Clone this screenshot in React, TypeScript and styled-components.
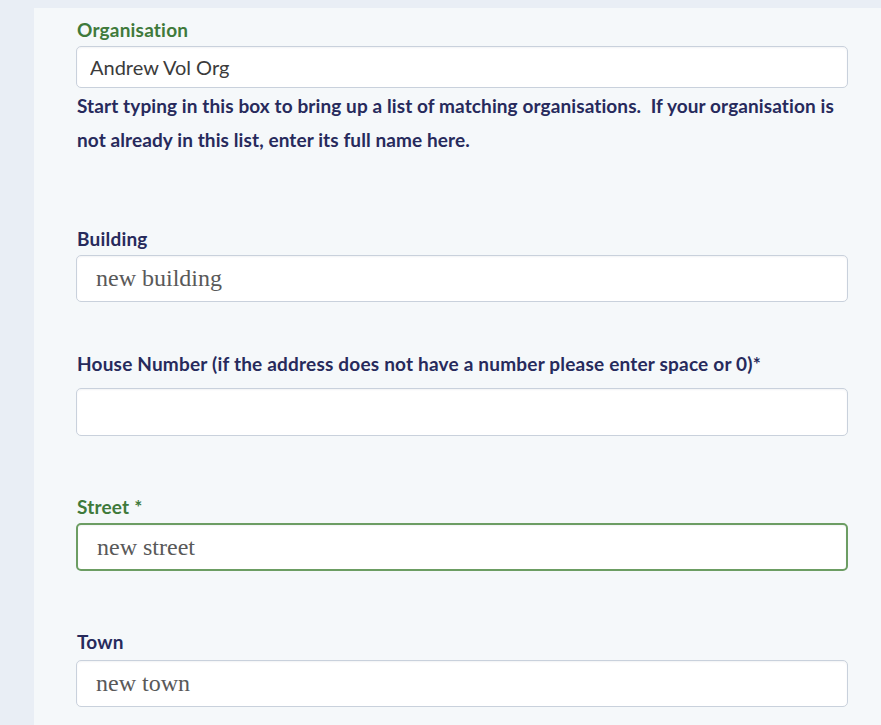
import styled, { createGlobalStyle } from 'styled-components'

const GlobalStyle = createGlobalStyle`
  html, body {
    margin: 0;
    padding: 0;
    background: #e9eef5;
  }
`

const Page = styled.div`
  min-height: 725px;
  padding: 8px 0 0 34px;
  box-sizing: border-box;
  background: #e9eef5;
  font-family: Lato, 'Open Sans', sans-serif;
`

const Panel = styled.form`
  min-height: 717px;
  padding: 12px 33px 0 42px;
  box-sizing: border-box;
  background: #f5f8fa;
`

const Field = styled.div<{ $top?: number }>`
  margin-top: ${(props) => props.$top ?? 0}px;
`

const Label = styled.label<{ $accent?: boolean; $gap?: number }>`
  display: block;
  font-size: 19px;
  line-height: 20px;
  font-weight: bold;
  letter-spacing: 0.2px;
  padding-left: 1px;
  margin-bottom: ${(props) => props.$gap ?? 6}px;
  color: ${(props) => (props.$accent ? '#3f7a3b' : '#272a5c')};
`

const Input = styled.input<{ $focus?: boolean; $h?: number }>`
  display: block;
  width: 100%;
  height: ${(props) => props.$h ?? 47}px;
  box-sizing: border-box;
  margin: 0;
  padding: 0 0 0 19px;
  background: #fff;
  border: ${(props) => (props.$focus ? '2px solid #6c9d63' : '1.5px solid #c9d1dc')};
  border-radius: 5px;
  box-shadow: inset 0 1px 2px rgba(40, 50, 80, 0.06);
  font-family: 'Liberation Serif', 'Times New Roman', serif;
  font-size: 24px;
  color: #595959;
  outline: none;
`

const OrgInput = styled(Input)`
  padding-left: 13px;
  font-family: Lato, 'Open Sans', sans-serif;
  font-size: 20px;
  color: #3b3b3b;
`

const Hint = styled.p`
  margin: 1px 0 0;
  padding-left: 1px;
  font-size: 19px;
  line-height: 34px;
  font-weight: bold;
  letter-spacing: 0.1px;
  color: #272a5c;
`

export default function App() {
  return (
    <Page>
      <GlobalStyle />
      <Panel>
        <Field>
          <Label $accent>Organisation</Label>
          <OrgInput $h={42} defaultValue="Andrew Vol Org" />
          <Hint>
            Start typing in this box to bring up a list of matching organisations.&nbsp; If your
            organisation is not already in this list, enter its full name here.
          </Hint>
        </Field>

        <Field $top={72}>
          <Label>Building</Label>
          <Input defaultValue="new building" />
        </Field>

        <Field $top={52}>
          <Label $gap={14}>
            House Number (if the address does not have a number please enter space or 0)*
          </Label>
          <Input $h={48} />
        </Field>

        <Field $top={61}>
          <Label $accent>Street *</Label>
          <Input $focus $h={48} defaultValue="new street" />
        </Field>

        <Field $top={61}>
          <Label $gap={8}>Town</Label>
          <Input defaultValue="new town" />
        </Field>
      </Panel>
    </Page>
  )
}
